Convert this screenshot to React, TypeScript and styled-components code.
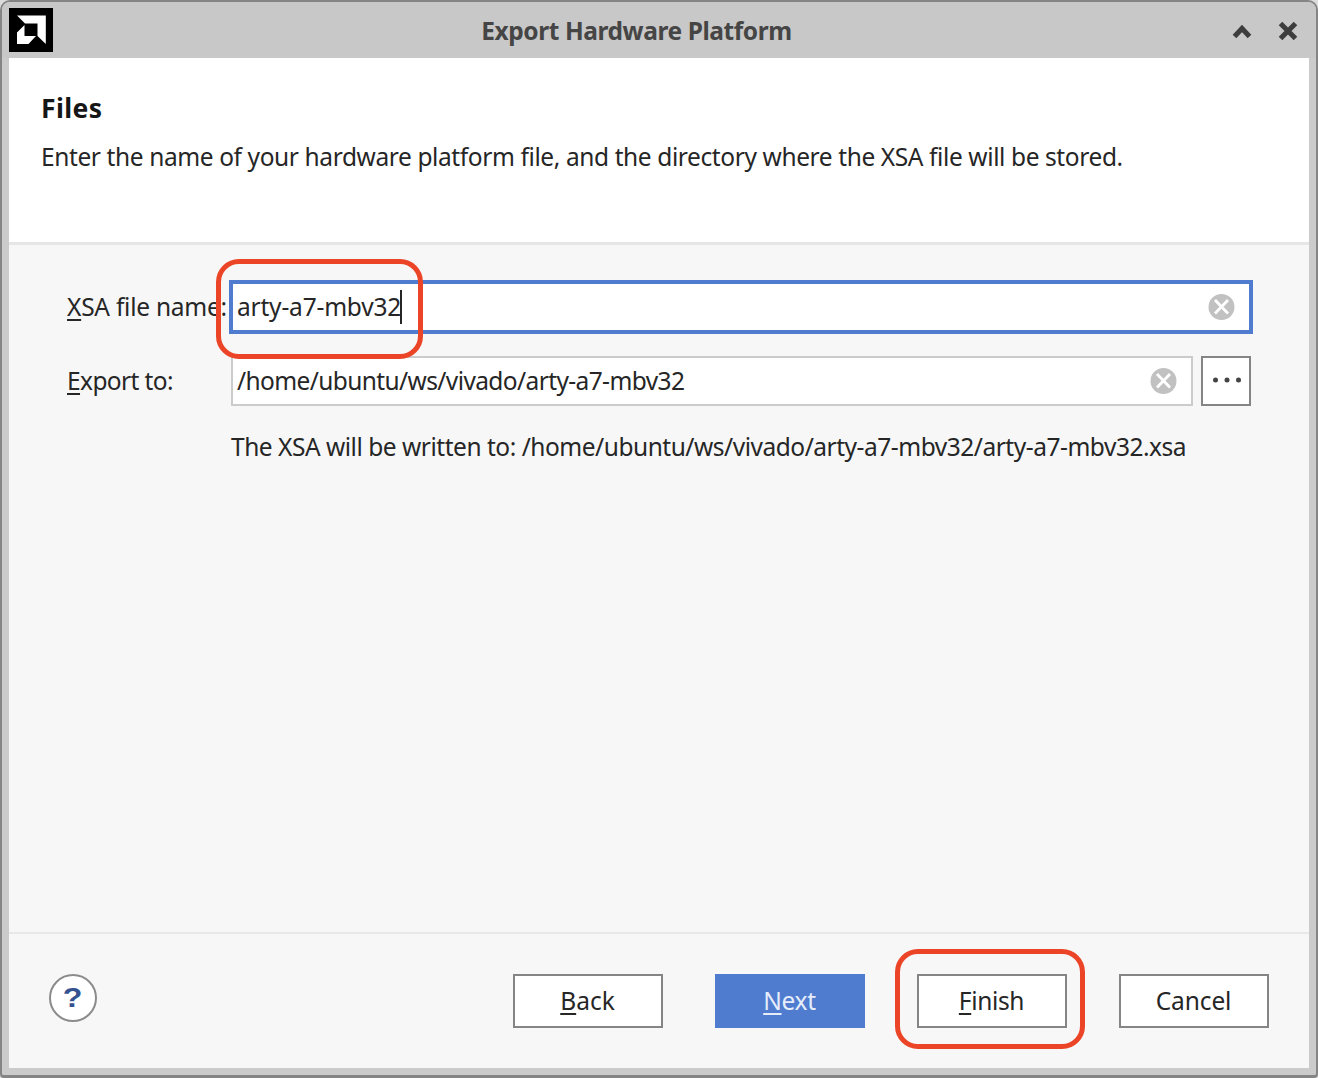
import React from "react";
import styled, { createGlobalStyle, css } from "styled-components";

const Global = createGlobalStyle`
  * { box-sizing: border-box; }
  body { margin: 0; background: #dcdcdc; overflow: hidden; }
`;

const Window = styled.div`
  width: 1318px;
  height: 1078px;
  display: flex;
  flex-direction: column;
  padding: 0 7px 7px;
  background: #cbcbcb;
  border: 2px solid #858585;
  border-bottom-width: 3px;
  border-radius: 10px 10px 4px 4px;
  font-family: "Noto Sans", "Open Sans", sans-serif;
  font-size: 24.5px;
  line-height: 34px;
  color: #262626;
  white-space: nowrap;
`;

const TitleBar = styled.header`
  height: 56px;
  flex: none;
  margin: 0 -7px;
  padding: 0 18px 0 7px;
  display: grid;
  grid-template-columns: 1fr auto 1fr;
  align-items: center;
  background: #c8c8c8;
  border-radius: 8px 8px 0 0;
`;

const Title = styled.h1`
  margin: 2px 34px 0 0;
  font-size: 24.5px;
  font-weight: 700;
  line-height: 34px;
  color: #454545;
  letter-spacing: -0.42px;
`;

const WindowControls = styled.div`
  display: flex;
  justify-content: flex-end;
  align-items: center;
  gap: 26px;
  padding-top: 2px;
`;

const Intro = styled.section`
  height: 187px;
  flex: none;
  padding: 33px 32px 0;
  background: #fff;
  border-bottom: 3px solid #e6e6e6;
`;

const Heading = styled.h2`
  margin: 0 0 15px;
  font-size: 26.5px;
  font-weight: 700;
  line-height: 34px;
  letter-spacing: 0.4px;
  color: #161616;
`;

const Text = styled.span<{ $ls?: number }>`
  letter-spacing: ${(p) => p.$ls ?? 0}px;
`;

const Form = styled.main`
  flex: 1;
  display: flex;
  flex-direction: column;
  padding: 35px 56px 0 58px;
  background: #f7f7f7;
`;

const Row = styled.div<{ $h: number; $mt?: number }>`
  display: grid;
  grid-template-columns: 164px 1fr;
  align-items: center;
  height: ${(p) => p.$h}px;
  margin-top: ${(p) => p.$mt ?? 0}px;
`;

const FieldLine = styled.div`
  display: flex;
  gap: 8px;
  margin-right: 2px;
`;

const Field = styled.div<{ $focused?: boolean }>`
  position: relative;
  flex: 1;
  display: flex;
  align-items: center;
  justify-content: space-between;
  background: #fff;
  ${(p) =>
    p.$focused
      ? css`
          height: 54px;
          margin-left: -2px;
          padding: 0 14px 0 4px;
          border: 4px solid #4f7ccf;
        `
      : css`
          height: 50px;
          padding: 0 14px 0 4px;
          border: 2px solid #cbcbcb;
        `}
`;

const Value = styled.span`
  display: flex;
  align-items: center;
`;

const Caret = styled.i`
  width: 2px;
  height: 34px;
  margin-left: -1px;
  background: #262626;
`;

const Highlight = styled.div<{ $inset: string; $width?: string }>`
  position: absolute;
  inset: ${(p) => p.$inset};
  width: ${(p) => p.$width ?? "auto"};
  border: 5px solid #eb4427;
  border-radius: 23px;
  pointer-events: none;
  z-index: 2;
`;

const Browse = styled.button`
  width: 50px;
  height: 50px;
  padding: 0 0 2px 1px;
  display: flex;
  align-items: center;
  justify-content: center;
  border: 2px solid #858585;
  background: #fff;
`;

const Footer = styled.footer`
  height: 136px;
  flex: none;
  display: flex;
  align-items: flex-start;
  justify-content: space-between;
  padding: 39px 40px 0;
  background: #f7f7f7;
  border-top: 2px solid #e8e8e8;
`;

const Help = styled.button`
  width: 48px;
  height: 48px;
  margin-top: 0.5px;
  padding: 0;
  border: 2px solid #8b8b8b;
  border-radius: 50%;
  background: #fff;
  display: flex;
  align-items: center;
  justify-content: center;
`;

const HelpMark = styled.span`
  font: 700 28px/30px "Liberation Sans", Arial, sans-serif;
  color: #34528f;
  transform: scaleX(1.15);
`;

const Actions = styled.div`
  display: flex;
  gap: 52px;
  padding-top: 1px;
`;

const Action = styled.button<{ $primary?: boolean; $ls?: number }>`
  position: relative;
  width: 150px;
  height: 54px;
  padding: 0 1px 1px 0;
  font: inherit;
  letter-spacing: ${(p) => p.$ls ?? 0}px;
  color: ${(p) => (p.$primary ? "#e6edfa" : "#262626")};
  background: ${(p) => (p.$primary ? "#4f7ccf" : "#fff")};
  border: 2px solid ${(p) => (p.$primary ? "#4f7ccf" : "#858585")};
`;

const Key = styled.span`
  text-decoration: underline;
  text-decoration-thickness: 2px;
  text-underline-offset: 3px;
  text-decoration-skip-ink: none;
`;

const Logo = () => (
  <svg width="44" height="44" viewBox="0 0 44 44">
    <rect width="44" height="44" />
    <path fill="#fff" d="M8 7.5H36.8V36L28.5 28V15.5H16ZM15.5 17V28H27L19.5 36H8V24.5Z" />
  </svg>
);

const Clear = () => (
  <svg width="27" height="27" viewBox="0 0 27 27">
    <circle cx="13.5" cy="13" r="13" fill="#c1c1c1" />
    <path d="M7 6L20 19.5M20 6L7 19.5" stroke="#fff" strokeWidth="2.8" />
  </svg>
);

export default function App() {
  return (
    <>
      <Global />
      <Window>
        <TitleBar>
          <Logo />
          <Title>Export Hardware Platform</Title>
          <WindowControls>
            <svg width="20" height="20" viewBox="0 0 20 20">
              <path d="M2.5 15.5L10 7.5L17.5 15.5" fill="none" stroke="#3d3d3d" strokeWidth="5" />
            </svg>
            <svg width="20" height="20" viewBox="0 0 20 20">
              <path d="M2.5 2.5L17.5 17.5M17.5 2.5L2.5 17.5" fill="none" stroke="#3d3d3d" strokeWidth="5" />
            </svg>
          </WindowControls>
        </TitleBar>
        <Intro>
          <Heading>Files</Heading>
          <Text $ls={-0.395}>
            Enter the name of your hardware platform file, and the directory where the XSA file will be stored.
          </Text>
        </Intro>
        <Form>
          <Row $h={54}>
            <Text $ls={-0.24}>
              <Key>X</Key>SA file name:
            </Text>
            <Field $focused>
              <Value>
                <Text $ls={-0.2}>arty-a7-mbv32</Text>
                <Caret />
              </Value>
              <Clear />
              <Highlight $inset="-25px auto -29px -17px" $width="207px" />
            </Field>
          </Row>
          <Row $h={50} $mt={22}>
            <Text $ls={-0.6}>
              <Key>E</Key>xport to:
            </Text>
            <FieldLine>
              <Field>
                <Text $ls={-0.61}>/home/ubuntu/ws/vivado/arty-a7-mbv32</Text>
                <Clear />
              </Field>
              <Browse>
                <svg width="30" height="6" viewBox="0 0 30 6" fill="#444">
                  <circle cx="3.5" cy="3" r="2.5" />
                  <circle cx="15" cy="3" r="2.5" />
                  <circle cx="26.5" cy="3" r="2.5" />
                </svg>
              </Browse>
            </FieldLine>
          </Row>
          <Row $h={34} $mt={24}>
            <span />
            <Text $ls={-0.475}>The XSA will be written to: /home/ubuntu/ws/vivado/arty-a7-mbv32/arty-a7-mbv32.xsa</Text>
          </Row>
        </Form>
        <Footer>
          <Help>
            <HelpMark>?</HelpMark>
          </Help>
          <Actions>
            <Action>
              <Key>B</Key>ack
            </Action>
            <Action $primary $ls={-0.3}>
              <Key>N</Key>ext
            </Action>
            <Action $ls={-0.35}>
              <Key>F</Key>inish
              <Highlight $inset="-27px -20px -23px -24px" />
            </Action>
            <Action $ls={-0.1}>Cancel</Action>
          </Actions>
        </Footer>
      </Window>
    </>
  );
}
